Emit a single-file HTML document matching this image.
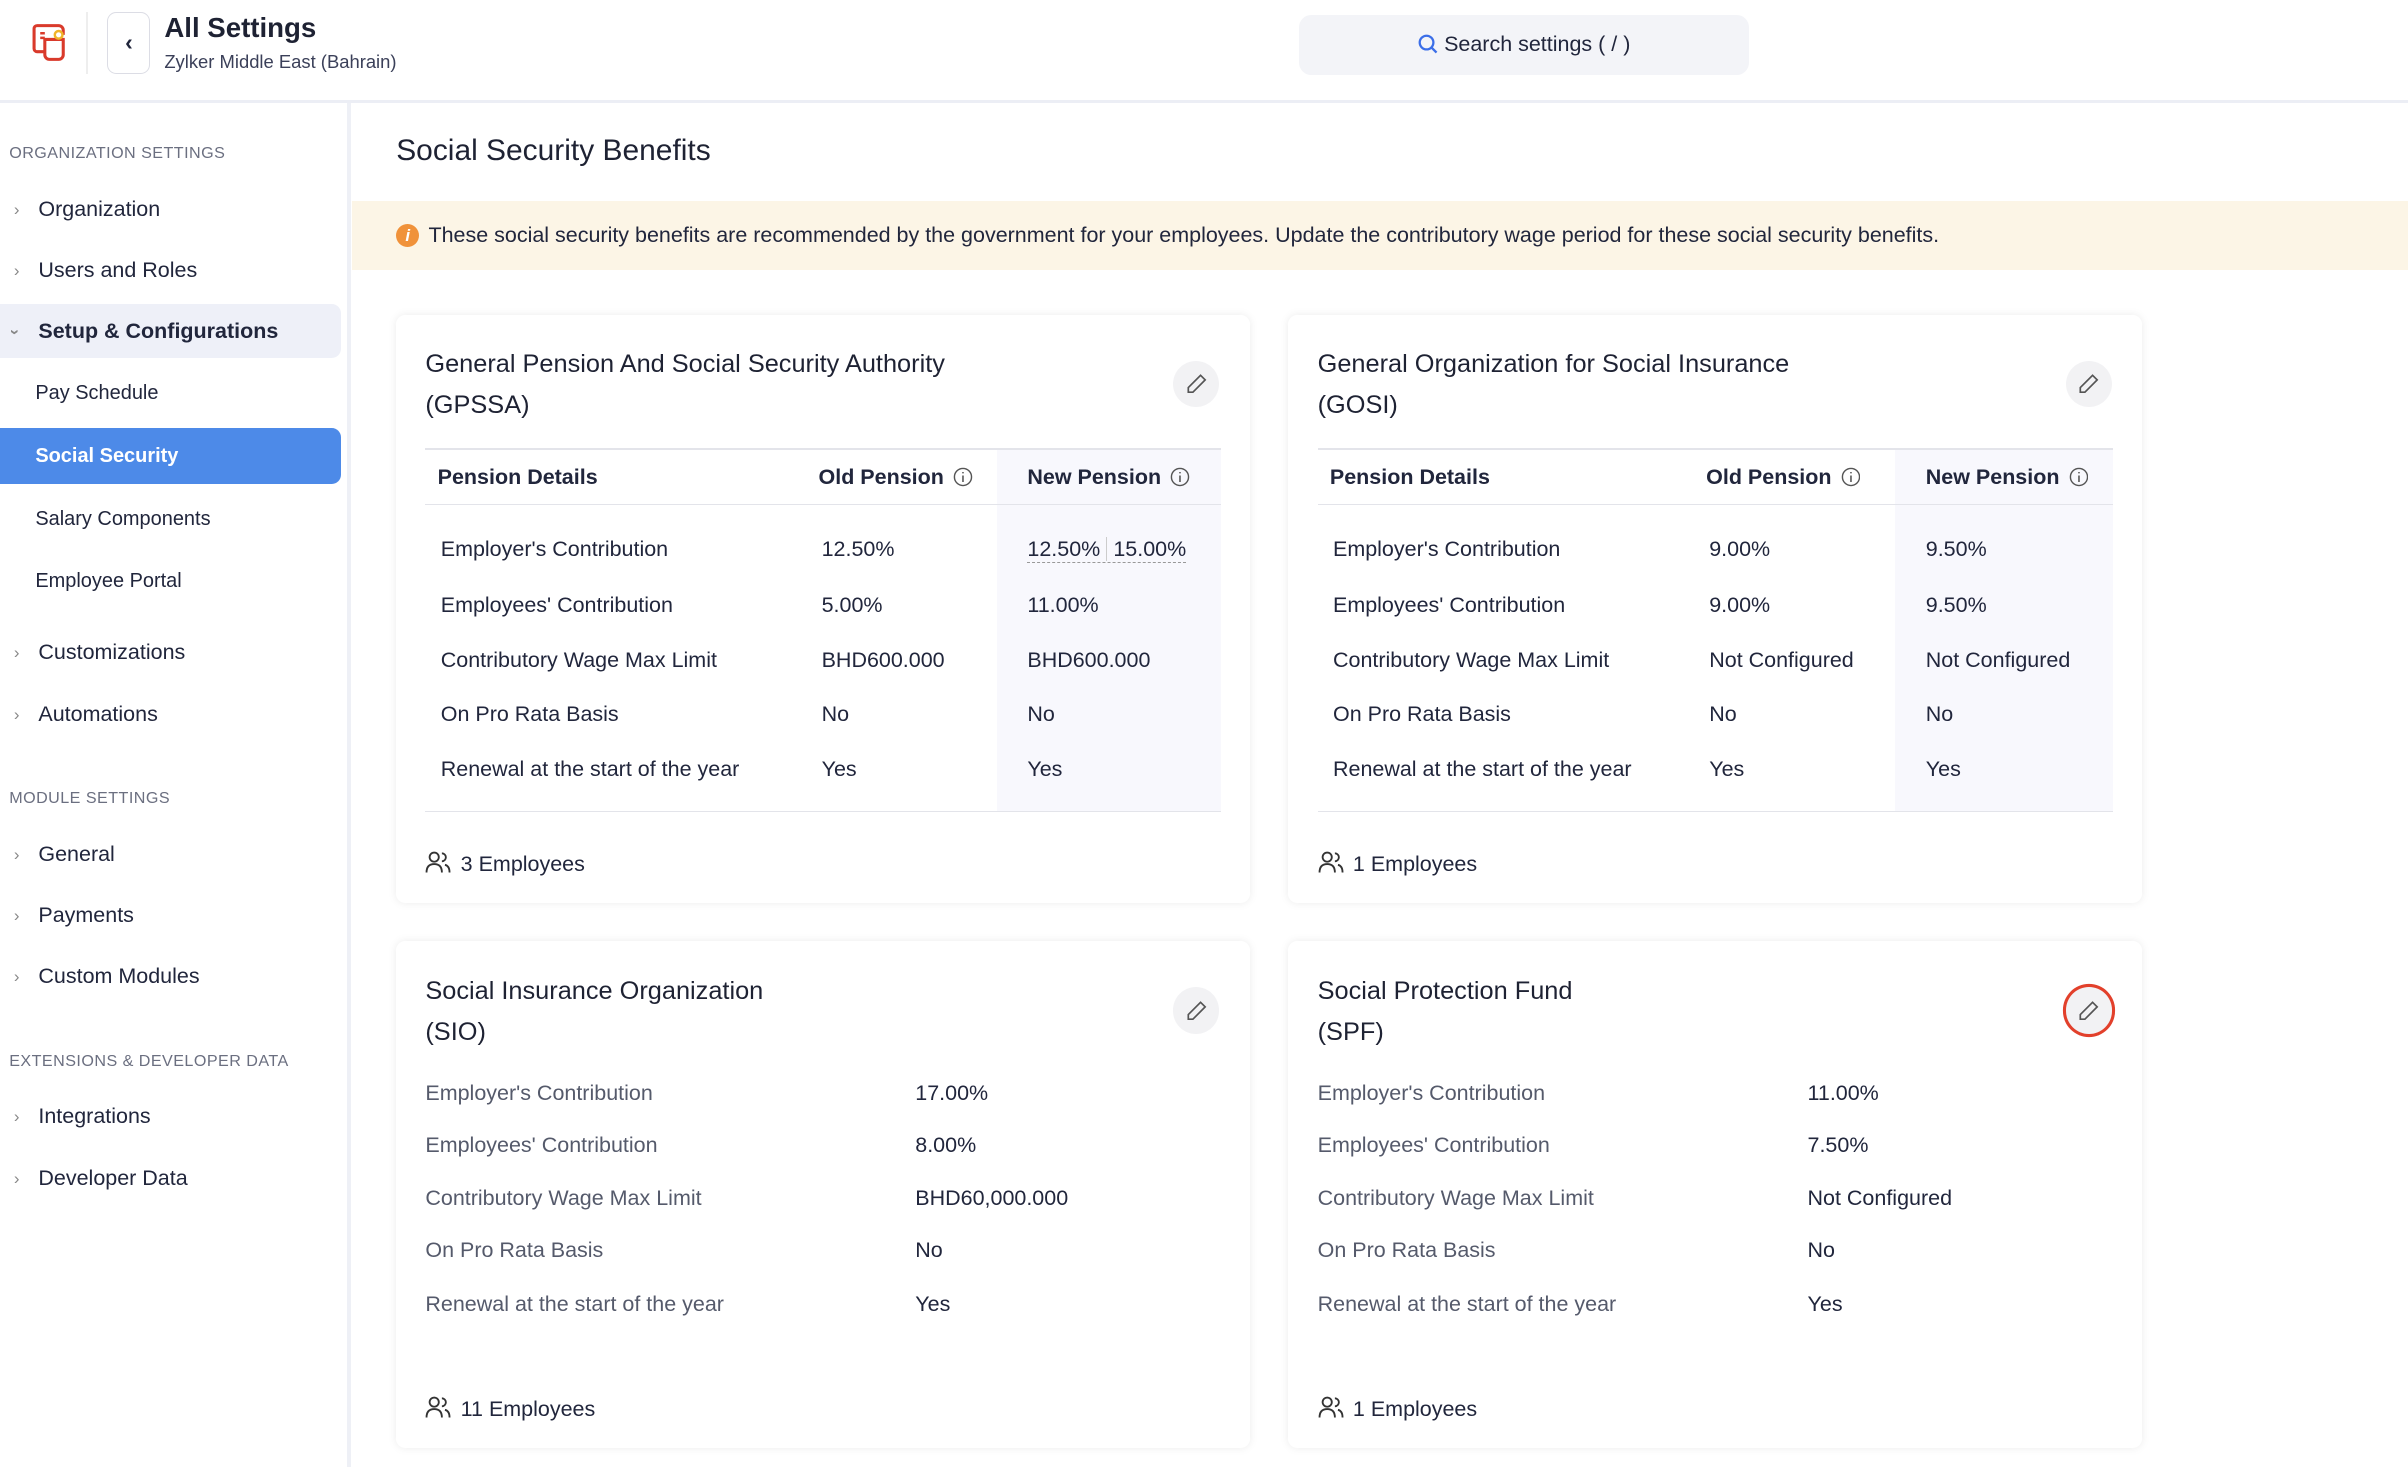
<!DOCTYPE html>
<html><head><meta charset="utf-8"><style>
html{zoom:1.53571}
body{margin:0;width:1568px;height:955px;overflow:hidden;font-family:"Liberation Sans",sans-serif;color:#21263c;background:#fff;position:relative}
.a{position:absolute}
.hdr{left:0;top:0;width:1568px;height:65px;border-bottom:2px solid #eceef5;background:#fff}
.side{left:0;top:67px;width:226px;height:888px;border-right:3px solid #eef0f6}
.sec{font-size:10.5px;color:#6b6f80;letter-spacing:.3px;left:6px}
.it{font-size:14px;color:#21263c;left:25px}
.chev{position:absolute;left:-16px;top:2px;font-size:11px;color:#888}
.sub{font-size:13px;left:23px}
.card{background:#fff;border-radius:6px;box-shadow:0 0 6px rgba(0,0,0,.08)}
.ttl{font-size:16.5px;line-height:27px;color:#1e2233}
.edit{width:30px;height:30px;border-radius:50%;background:#f2f2f4}
.edit svg{position:absolute;left:8px;top:8px}
.emp{font-size:14px}
.row{font-size:14px;color:#555a6b}
.val{font-size:14px;color:#21263c;line-height:16px}
.ic{vertical-align:-2px;margin-left:2px}
</style></head><body>
<div class="a hdr">
 <svg class="a" style="left:20px;top:14px" width="26" height="28" viewBox="0 0 26 28"><path d="M4 3h14a3 3 0 0 1 3 3v3M4 3a2 2 0 0 0-2 2v13a2 2 0 0 0 2 2h5" fill="none" stroke="#d93a2b" stroke-width="2"/><path d="M9 12h12v10a3 3 0 0 1-3 3h-6a3 3 0 0 1-3-3z" fill="none" stroke="#d93a2b" stroke-width="2"/><path d="M6 8h3M6 11h3" stroke="#d93a2b" stroke-width="1.6"/><circle cx="18" cy="9" r="2.5" fill="none" stroke="#f0b429" stroke-width="1.6"/></svg>
 <div class="a" style="left:56px;top:8px;width:1px;height:40px;background:#eee"></div>
 <div class="a" style="left:70px;top:8px;width:28px;height:40px;border:1px solid #dcdde5;border-radius:6px;box-sizing:border-box;text-align:center;line-height:38px;font-size:15px;font-weight:bold">‹</div>
 <div class="a" style="left:107px;top:8px;font-size:18px;font-weight:bold;color:#1e2233">All Settings</div>
 <div class="a" style="left:107px;top:33px;font-size:12px;color:#3b4059">Zylker Middle East (Bahrain)</div>
 <div class="a" style="left:846px;top:10px;width:293px;height:39px;background:#f3f4f8;border-radius:8px;font-size:14px;color:#21263c;text-align:center;line-height:39px"><svg width="13" height="13" viewBox="0 0 14 14" style="vertical-align:-2px;margin-right:4px"><circle cx="6" cy="6" r="4.8" fill="none" stroke="#3b6ee8" stroke-width="1.6"/><path d="M9.5 9.5L13 13" stroke="#3b6ee8" stroke-width="1.6"/></svg>Search settings ( / )</div>
</div>
<div class="a side">
 <div class="a sec" style="top:27px">ORGANIZATION SETTINGS</div>
 <div class="a it" style="top:61px"><span class="chev">›</span>Organization</div>
 <div class="a it" style="top:101px"><span class="chev">›</span>Users and Roles</div>
 <div class="a" style="left:0;top:131px;width:222px;height:35px;background:#eef0f8;border-radius:0 6px 6px 0"></div>
 <div class="a it" style="top:141px;font-weight:bold"><span class="chev" style="transform:rotate(90deg);left:-17px">›</span>Setup &amp; Configurations</div>
 <div class="a it sub" style="top:182px">Pay Schedule</div>
 <div class="a" style="left:0;top:212px;width:222px;height:36px;background:#4d8ae8;border-radius:0 6px 6px 0"></div>
 <div class="a it sub" style="top:223px;color:#fff;font-weight:bold">Social Security</div>
 <div class="a it sub" style="top:264px">Salary Components</div>
 <div class="a it sub" style="top:304px">Employee Portal</div>
 <div class="a it" style="top:350px"><span class="chev">›</span>Customizations</div>
 <div class="a it" style="top:390px"><span class="chev">›</span>Automations</div>
 <div class="a sec" style="top:447px">MODULE SETTINGS</div>
 <div class="a it" style="top:481px"><span class="chev">›</span>General</div>
 <div class="a it" style="top:521px"><span class="chev">›</span>Payments</div>
 <div class="a it" style="top:561px"><span class="chev">›</span>Custom Modules</div>
 <div class="a sec" style="top:618px">EXTENSIONS &amp; DEVELOPER DATA</div>
 <div class="a it" style="top:652px"><span class="chev">›</span>Integrations</div>
 <div class="a it" style="top:692px"><span class="chev">›</span>Developer Data</div>
</div>
<div class="a" style="left:258px;top:87px;font-size:19.5px;color:#1e2233">Social Security Benefits</div>
<div class="a" style="left:229px;top:131px;width:1339px;height:45px;background:#fcf5e6"></div>
<div class="a" style="left:258px;top:146px;width:15px;height:15px;border-radius:50%;background:#f0923a;color:#fff;font-size:11px;text-align:center;line-height:15px;font-style:italic;font-weight:bold">i</div>
<div class="a" style="left:279px;top:145px;font-size:14px;color:#21263c">These social security benefits are recommended by the government for your employees. Update the contributory wage period for these social security benefits.</div>

<!-- card 1 -->
<div class="a card" style="left:258px;top:205px;width:556px;height:383px">
 <div class="a ttl" style="left:19px;top:19px">General Pension And Social Security Authority<br>(GPSSA)</div>
 <div class="a edit" style="left:506px;top:30px"><svg width="14" height="14" viewBox="0 0 14 14"><path d="M9.5 1.5l3 3-8 8H1.5v-3z" fill="none" stroke="#555" stroke-width="1.1"/></svg></div>
 <div class="a" style="left:391px;top:88px;width:146px;height:235px;background:#f8f8fd"></div>
 <div class="a" style="left:19px;top:87px;width:518px;height:1px;background:#e3e4ea"></div>
 <div class="a" style="left:19px;top:123px;width:518px;height:1px;background:#e3e4ea"></div>
 <div class="a" style="left:19px;top:323px;width:518px;height:1px;background:#e3e4ea"></div>
 <div class="a val" style="left:27px;top:98px;font-weight:bold">Pension Details</div>
 <div class="a val" style="left:275px;top:98px;font-weight:bold">Old Pension <svg class="ic" width="13" height="13" viewBox="0 0 14 14"><circle cx="7" cy="7" r="6" fill="none" stroke="#555" stroke-width="1"/><path d="M7 6v4.5M7 3.5v1" stroke="#555" stroke-width="1.1"/></svg></div>
 <div class="a val" style="left:411px;top:98px;font-weight:bold">New Pension <svg class="ic" width="13" height="13" viewBox="0 0 14 14"><circle cx="7" cy="7" r="6" fill="none" stroke="#555" stroke-width="1"/><path d="M7 6v4.5M7 3.5v1" stroke="#555" stroke-width="1.1"/></svg></div>
 <div class="a val" style="left:29px;top:145px">Employer's Contribution</div><div class="a val" style="left:277px;top:145px">12.50%</div><div class="a val" style="left:411px;top:145px;border-bottom:1px dashed #999">12.50% <span style="border-left:1px solid #ccc;padding-left:4px">15.00%</span></div>
 <div class="a val" style="left:29px;top:181px">Employees' Contribution</div><div class="a val" style="left:277px;top:181px">5.00%</div><div class="a val" style="left:411px;top:181px">11.00%</div>
 <div class="a val" style="left:29px;top:217px">Contributory Wage Max Limit</div><div class="a val" style="left:277px;top:217px">BHD600.000</div><div class="a val" style="left:411px;top:217px">BHD600.000</div>
 <div class="a val" style="left:29px;top:252px">On Pro Rata Basis</div><div class="a val" style="left:277px;top:252px">No</div><div class="a val" style="left:411px;top:252px">No</div>
 <div class="a val" style="left:29px;top:288px">Renewal at the start of the year</div><div class="a val" style="left:277px;top:288px">Yes</div><div class="a val" style="left:411px;top:288px">Yes</div>
 <div class="a emp" style="left:19px;top:349px"><svg width="17" height="15" viewBox="0 0 17 15" style="vertical-align:-2px;margin-right:6px"><circle cx="6" cy="4" r="3" fill="none" stroke="#333" stroke-width="1.2"/><path d="M1 14c0-4 2-5.5 5-5.5s5 1.5 5 5.5M11 1.5a2.6 2.6 0 0 1 0 5.2M13 9c2 .5 3 2 3 5" fill="none" stroke="#333" stroke-width="1.2"/></svg>3 Employees</div>
</div>

<!-- card 2 -->
<div class="a card" style="left:839px;top:205px;width:556px;height:383px">
 <div class="a ttl" style="left:19px;top:19px">General Organization for Social Insurance<br>(GOSI)</div>
 <div class="a edit" style="left:506px;top:30px"><svg width="14" height="14" viewBox="0 0 14 14"><path d="M9.5 1.5l3 3-8 8H1.5v-3z" fill="none" stroke="#555" stroke-width="1.1"/></svg></div>
 <div class="a" style="left:395px;top:88px;width:142px;height:235px;background:#f8f8fd"></div>
 <div class="a" style="left:19px;top:87px;width:518px;height:1px;background:#e3e4ea"></div>
 <div class="a" style="left:19px;top:123px;width:518px;height:1px;background:#e3e4ea"></div>
 <div class="a" style="left:19px;top:323px;width:518px;height:1px;background:#e3e4ea"></div>
 <div class="a val" style="left:27px;top:98px;font-weight:bold">Pension Details</div>
 <div class="a val" style="left:272px;top:98px;font-weight:bold">Old Pension <svg class="ic" width="13" height="13" viewBox="0 0 14 14"><circle cx="7" cy="7" r="6" fill="none" stroke="#555" stroke-width="1"/><path d="M7 6v4.5M7 3.5v1" stroke="#555" stroke-width="1.1"/></svg></div>
 <div class="a val" style="left:415px;top:98px;font-weight:bold">New Pension <svg class="ic" width="13" height="13" viewBox="0 0 14 14"><circle cx="7" cy="7" r="6" fill="none" stroke="#555" stroke-width="1"/><path d="M7 6v4.5M7 3.5v1" stroke="#555" stroke-width="1.1"/></svg></div>
 <div class="a val" style="left:29px;top:145px">Employer's Contribution</div><div class="a val" style="left:274px;top:145px">9.00%</div><div class="a val" style="left:415px;top:145px">9.50%</div>
 <div class="a val" style="left:29px;top:181px">Employees' Contribution</div><div class="a val" style="left:274px;top:181px">9.00%</div><div class="a val" style="left:415px;top:181px">9.50%</div>
 <div class="a val" style="left:29px;top:217px">Contributory Wage Max Limit</div><div class="a val" style="left:274px;top:217px">Not Configured</div><div class="a val" style="left:415px;top:217px">Not Configured</div>
 <div class="a val" style="left:29px;top:252px">On Pro Rata Basis</div><div class="a val" style="left:274px;top:252px">No</div><div class="a val" style="left:415px;top:252px">No</div>
 <div class="a val" style="left:29px;top:288px">Renewal at the start of the year</div><div class="a val" style="left:274px;top:288px">Yes</div><div class="a val" style="left:415px;top:288px">Yes</div>
 <div class="a emp" style="left:19px;top:349px"><svg width="17" height="15" viewBox="0 0 17 15" style="vertical-align:-2px;margin-right:6px"><circle cx="6" cy="4" r="3" fill="none" stroke="#333" stroke-width="1.2"/><path d="M1 14c0-4 2-5.5 5-5.5s5 1.5 5 5.5M11 1.5a2.6 2.6 0 0 1 0 5.2M13 9c2 .5 3 2 3 5" fill="none" stroke="#333" stroke-width="1.2"/></svg>1 Employees</div>
</div>

<!-- card 3 -->
<div class="a card" style="left:258px;top:613px;width:556px;height:330px">
 <div class="a ttl" style="left:19px;top:19px">Social Insurance Organization<br>(SIO)</div>
 <div class="a edit" style="left:506px;top:30px"><svg width="14" height="14" viewBox="0 0 14 14"><path d="M9.5 1.5l3 3-8 8H1.5v-3z" fill="none" stroke="#555" stroke-width="1.1"/></svg></div>
 <div class="a row" style="left:19px;top:91px">Employer's Contribution</div><div class="a val" style="left:338px;top:91px">17.00%</div>
 <div class="a row" style="left:19px;top:125px">Employees' Contribution</div><div class="a val" style="left:338px;top:125px">8.00%</div>
 <div class="a row" style="left:19px;top:159px">Contributory Wage Max Limit</div><div class="a val" style="left:338px;top:159px">BHD60,000.000</div>
 <div class="a row" style="left:19px;top:193px">On Pro Rata Basis</div><div class="a val" style="left:338px;top:193px">No</div>
 <div class="a row" style="left:19px;top:228px">Renewal at the start of the year</div><div class="a val" style="left:338px;top:228px">Yes</div>
 <div class="a emp" style="left:19px;top:296px"><svg width="17" height="15" viewBox="0 0 17 15" style="vertical-align:-2px;margin-right:6px"><circle cx="6" cy="4" r="3" fill="none" stroke="#333" stroke-width="1.2"/><path d="M1 14c0-4 2-5.5 5-5.5s5 1.5 5 5.5M11 1.5a2.6 2.6 0 0 1 0 5.2M13 9c2 .5 3 2 3 5" fill="none" stroke="#333" stroke-width="1.2"/></svg>11 Employees</div>
</div>

<!-- card 4 -->
<div class="a card" style="left:839px;top:613px;width:556px;height:330px">
 <div class="a ttl" style="left:19px;top:19px">Social Protection Fund<br>(SPF)</div>
 <div class="a edit" style="left:506px;top:30px;box-shadow:0 0 0 2px #e2402b"><svg width="14" height="14" viewBox="0 0 14 14"><path d="M9.5 1.5l3 3-8 8H1.5v-3z" fill="none" stroke="#555" stroke-width="1.1"/></svg></div>
 <div class="a row" style="left:19px;top:91px">Employer's Contribution</div><div class="a val" style="left:338px;top:91px">11.00%</div>
 <div class="a row" style="left:19px;top:125px">Employees' Contribution</div><div class="a val" style="left:338px;top:125px">7.50%</div>
 <div class="a row" style="left:19px;top:159px">Contributory Wage Max Limit</div><div class="a val" style="left:338px;top:159px">Not Configured</div>
 <div class="a row" style="left:19px;top:193px">On Pro Rata Basis</div><div class="a val" style="left:338px;top:193px">No</div>
 <div class="a row" style="left:19px;top:228px">Renewal at the start of the year</div><div class="a val" style="left:338px;top:228px">Yes</div>
 <div class="a emp" style="left:19px;top:296px"><svg width="17" height="15" viewBox="0 0 17 15" style="vertical-align:-2px;margin-right:6px"><circle cx="6" cy="4" r="3" fill="none" stroke="#333" stroke-width="1.2"/><path d="M1 14c0-4 2-5.5 5-5.5s5 1.5 5 5.5M11 1.5a2.6 2.6 0 0 1 0 5.2M13 9c2 .5 3 2 3 5" fill="none" stroke="#333" stroke-width="1.2"/></svg>1 Employees</div>
</div>
</body></html>
